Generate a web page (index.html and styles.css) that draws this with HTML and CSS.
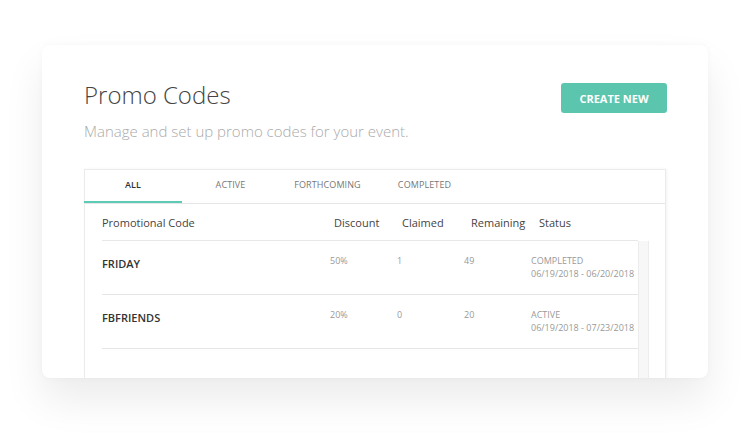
FILE: index.html
```html
<!DOCTYPE html>
<html>
<head>
<meta charset="utf-8">
<link rel="stylesheet" href="styles.css">
</head>
<body>
<div class="card">
  <div class="head">
    <h1 class="title">Promo Codes</h1>
    <button class="btn">CREATE NEW</button>
  </div>
  <p class="subtitle">Manage and set up promo codes for your event.</p>
  <div class="panel">
    <div class="tabs">
      <div class="tab active">ALL</div>
      <div class="tab">ACTIVE</div>
      <div class="tab">FORTHCOMING</div>
      <div class="tab">COMPLETED</div>
    </div>
    <div class="thead">
      <div class="th">Promotional Code</div>
      <div class="th th-discount">Discount</div>
      <div class="th th-claimed">Claimed</div>
      <div class="th th-remaining">Remaining</div>
      <div class="th th-status">Status</div>
    </div>
    <div class="tbody">
      <div class="rows">
        <div class="row">
          <div class="code">FRIDAY</div>
          <div class="cell">50%</div>
          <div class="cell">1</div>
          <div class="cell">49</div>
          <div class="cell status">COMPLETED<br>06/19/2018 - 06/20/2018</div>
        </div>
        <div class="row">
          <div class="code">FBFRIENDS</div>
          <div class="cell">20%</div>
          <div class="cell">0</div>
          <div class="cell">20</div>
          <div class="cell status">ACTIVE<br>06/19/2018 - 07/23/2018</div>
        </div>
        <div class="row empty"></div>
      </div>
      <div class="scrollbar"></div>
    </div>
  </div>
</div>
</body>
</html>
```
FILE: styles.css
```css
html, body {
  margin: 0;
  padding: 0;
  background: #ffffff;
  font-family: "Open Sans", "Liberation Sans", sans-serif;
}
body {
  width: 750px;
  height: 433px;
  overflow: hidden;
}
.card {
  margin: 45px 0 0 42px;
  width: 666px;
  height: 333px;
  background: #ffffff;
  border-radius: 8px;
  overflow: hidden;
  box-shadow: 0 22px 40px rgba(0, 0, 0, 0.08), 0 0 6px rgba(0, 0, 0, 0.03);
  box-sizing: border-box;
}
.head {
  display: flex;
  justify-content: space-between;
  align-items: flex-start;
  padding: 35px 41px 0 42px;
}
.title {
  margin: 0;
  font-size: 24px;
  line-height: 30px;
  font-weight: 300;
  color: #444;
}
.btn {
  width: 106px;
  height: 30px;
  border: none;
  border-radius: 3px;
  background: #5cc5ae;
  color: #fff;
  font-family: "Open Sans", "Liberation Sans", sans-serif;
  font-weight: 700;
  font-size: 11px;
  padding: 0;
  margin-top: 3px;
}
.subtitle {
  margin: 8px 0 0 42px;
  font-size: 15px;
  line-height: 20px;
  font-weight: 300;
  color: #aaa;
}
.panel {
  margin: 28px 0 0 42px;
  width: 582px;
  height: 240px;
  border: 1px solid #ebebeb;
  border-bottom: none;
  box-sizing: border-box;
  box-shadow: 1px 0 3px rgba(0, 0, 0, 0.05);
}
.tabs {
  display: flex;
  height: 33px;
  border-bottom: 1px solid #e6e6e6;
}
.tab {
  width: 97px;
  text-align: center;
  font-size: 9px;
  line-height: 30px;
  color: #777;
  letter-spacing: 0.1px;
  box-sizing: border-box;
}
.tab.active {
  color: #333;
  font-weight: 600;
  border-bottom: 2px solid #5ccbb5;
  height: 33px;
  margin-bottom: -1px;
  margin-left: -1px;
  width: 98px;
}
.thead {
  display: grid;
  grid-template-columns: 228px 67px 67px 67px 107px;
  margin-left: 17px;
  width: 536px;
  height: 36px;
  border-bottom: 1px solid #e8e8e8;
  align-items: center;
  font-size: 11px;
  color: #444;
}
.th-discount { padding-left: 4px; }
.th-claimed { padding-left: 5px; }
.th-remaining { padding-left: 7px; }
.th-status { padding-left: 8px; }
.tbody {
  display: flex;
  margin-left: 17px;
}
.rows {
  width: 536px;
}
.row {
  display: grid;
  grid-template-columns: 228px 67px 67px 67px 107px;
  height: 53px;
  border-bottom: 1px solid #e6e6e6;
  align-items: start;
}
.row.empty {
  border-bottom: none;
}
.code {
  padding-top: 15px;
  font-size: 11px;
  line-height: 15px;
  font-weight: 600;
  color: #333;
}
.cell {
  padding-top: 13px;
  font-size: 9px;
  line-height: 13px;
  color: #999;
  white-space: nowrap;
}
.scrollbar {
  width: 9px;
  height: 150px;
  background: #f7f7f7;
  border-left: 1px solid #ececec;
  border-right: 1px solid #ececec;
}
```
